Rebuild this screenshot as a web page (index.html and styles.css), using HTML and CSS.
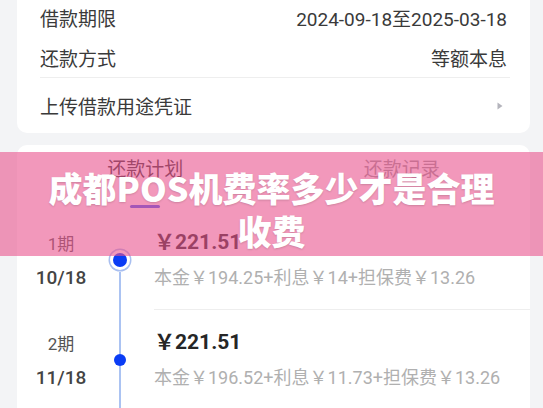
FILE: index.html
```html
<!DOCTYPE html>
<html lang="zh-CN">
<head>
<meta charset="utf-8">
<title>还款计划</title>
<link rel="stylesheet" href="styles.css">
</head>
<body>
<div class="page">
  <section class="card info">
    <div class="row"><span class="label">借款期限</span><span class="value">2024-09-18至2025-03-18</span></div>
    <div class="row sep"><span class="label">还款方式</span><span class="value">等额本息</span></div>
    <div class="row link"><span class="label">上传借款用途凭证</span><svg class="chev" width="6" height="8" viewBox="0 0 6 8"><path d="M0.5 0.5 L5.5 4 L0.5 7.5 Z" fill="#b4b4bc"/></svg></div>
  </section>

  <section class="card plan">
    <div class="tabs">
      <div class="tab active">还款计划</div>
      <div class="tab">还款记录</div>
    </div>

    <div class="item">
      <div class="when"><span class="term">1期</span><span class="date">10/18</span></div>
      <div class="track first"><span class="gap"></span><span class="dot ring"></span><span class="line"></span></div>
      <div class="detail">
        <div class="amount">￥221.51</div>
        <div class="parts">本金￥194.25+利息￥14+担保费￥13.26</div>
      </div>
    </div>

    <div class="item">
      <div class="when"><span class="term">2期</span><span class="date">11/18</span></div>
      <div class="track"><span class="line top"></span><span class="dot"></span><span class="line"></span></div>
      <div class="detail">
        <div class="amount">￥221.51</div>
        <div class="parts">本金￥196.52+利息￥11.73+担保费￥13.26</div>
      </div>
    </div>
  </section>

  <div class="banner"><h1 class="title">成都POS机费率多少才是合理<br>收费</h1></div>
</div>
</body>
</html>
```

FILE: styles.css
```css
* { box-sizing: border-box; margin: 0; padding: 0; }
html, body { width: 543px; height: 408px; overflow: hidden; }
body {
  background: #f3f4f6;
  font-family: Roboto, "Noto Sans CJK SC", sans-serif;
  color: #333;
}
.page { position: relative; display: flow-root; height: 408px; padding: 0 13px 0 17px; }

.card { background: #fff; border-radius: 10px; }

.info { margin-top: -10px; padding: 7px 20px 0 23px; }
.row {
  height: 40px;
  display: flex;
  align-items: center;
  justify-content: space-between;
  font-size: 19px;
  color: #3a3a3a;
}
.row .value { padding-right: 3px; }
.row.sep { height: 41px; border-bottom: 1px solid #eeeeee; }
.row.link { height: 55px; }
.chev { margin-right: 7px; }

.plan { margin-top: 12px; overflow: hidden; height: 300px; }
.tabs { display: flex; height: 65px; }
.tab {
  flex: 1;
  text-align: center;
  font-size: 19px;
  line-height: 26px;
  padding-top: 12px;
  color: #999;
}
.tab.active { color: #333; }
.tab.active::after {
  content: "";
  display: block;
  width: 30px;
  height: 3px;
  margin: 22px auto 0;
  border-radius: 2px;
  background: #3d5cf5;
}

.item {
  display: grid;
  grid-template-columns: 88px 30px 1fr;
  height: 100px;
}
.when {
  display: flex;
  flex-direction: column;
  align-items: center;
  padding-top: 22px;
}
.term { font-size: 17px; line-height: 24px; color: #555; }
.date { font-size: 19px; line-height: 24px; margin-top: 10px; font-weight: 500; color: #444; }

.track { display: flex; flex-direction: column; align-items: center; }
.track .gap { height: 43px; flex: none; }
.track .line { width: 2px; flex: 1; background: #abc3f2; }
.track.first .line { margin-top: 5px; }
.track .line.top { flex: none; height: 44px; }
.dot {
  flex: none;
  width: 12px;
  height: 12px;
  border-radius: 50%;
  background: #0a3cf5;
}
.dot.ring {
  width: 14px;
  height: 14px;
  box-shadow: 0 0 0 3px #fff, 0 0 0 4.5px #a9bff0;
}

.detail {
  margin-left: 19px;
  padding-top: 18px;
  border-bottom: 1px solid #eeeeee;
}
.amount { font-size: 21px; line-height: 28px; font-weight: 700; color: #262626; }
.parts { font-size: 18px; line-height: 24px; margin-top: 10px; color: #b0b0b0; white-space: nowrap; }

.banner {
  position: absolute;
  left: 0;
  right: 0;
  top: 152px;
  height: 104px;
  padding-top: 14px;
  background: rgba(233, 83, 142, 0.6);
  text-align: center;
}
.title {
  font-family: "Noto Sans CJK SC", sans-serif;
  font-size: 34px;
  line-height: 43px;
  font-weight: 900;
  color: #fff;
  text-shadow: 0 1px 2px rgba(0, 0, 0, 0.15);
}
```
